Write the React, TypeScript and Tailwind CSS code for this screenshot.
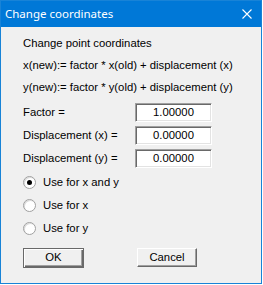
import { useState } from "react";

const rows = [
  { label: "Factor =", value: "1.00000" },
  { label: "Displacement (x) =", value: "0.00000" },
  { label: "Displacement (y) =", value: "0.00000" },
];

const options = ["Use for x and y", "Use for x", "Use for y"];

function Radio({ checked, label, onClick }: { checked: boolean; label: string; onClick: () => void }) {
  return (
    <button type="button" onClick={onClick} className="flex h-[23px] items-center gap-[7px] text-left">
      <span className="flex h-[13px] w-[13px] items-center justify-center rounded-full border border-[#a0a0a0] bg-white shadow-[inset_1px_1px_0_#dcdcdc]">
        {checked && <span className="h-[5px] w-[5px] rounded-full bg-black" />}
      </span>
      <span>{label}</span>
    </button>
  );
}

function WinButton({ children, isDefault }: { children: string; isDefault?: boolean }) {
  return (
    <button
      type="button"
      className={
        isDefault
          ? "h-[20px] w-[61px] border border-[#696969] bg-[#f0f0f0] shadow-[inset_1px_1px_0_#fff,inset_-1px_-1px_0_#696969,inset_-2px_-2px_0_#a0a0a0]"
          : "h-[19px] w-[60px] border-t border-l border-white border-b border-r border-b-[#696969] border-r-[#696969] bg-[#f0f0f0] shadow-[inset_-1px_-1px_0_#a0a0a0]"
      }
    >
      {children}
    </button>
  );
}

export default function App() {
  const [mode, setMode] = useState(0);

  return (
    <div className="h-[285px] w-[263px] bg-white">
      <div className="flex h-[284px] w-[262px] flex-col border border-[#1883d7] bg-[#f0f0f0]">
        <div className="flex h-[26px] shrink-0 items-center justify-between bg-[#0078d7] pl-[4px] pr-[9px] text-[11.5px] text-white [font-family:'Noto_Sans',sans-serif]">
          <span className="-mt-[1px]">Change coordinates</span>
          <svg width="10" height="10" viewBox="0 0 10 10" className="-mt-[1px]" aria-hidden>
            <path d="M0.5 0.5L9.5 9.5M9.5 0.5L0.5 9.5" stroke="white" strokeWidth="1.1" />
          </svg>
        </div>

        <div className="flex flex-col pl-[22px] pt-[6px] text-[11.3px] leading-none text-black [font-family:'Liberation_Sans',Arial,sans-serif]">
          <div className="flex h-[22px] items-center">Change point coordinates</div>
          <div className="flex h-[22px] items-center">x(new):= factor * x(old) + displacement (x)</div>
          <div className="flex h-[22px] items-center">y(new):= factor * y(old) + displacement (y)</div>

          <div className="mt-[2px] flex flex-col">
            {rows.map((r) => (
              <div key={r.label} className="flex h-[23px] items-center">
                <span className="w-[112px]">{r.label}</span>
                <div className="flex h-[19px] w-[77px] items-center justify-center border border-t-[#a0a0a0] border-l-[#a0a0a0] border-b-white border-r-white bg-white shadow-[inset_1px_1px_0_#696969,inset_-1px_-1px_0_#e3e3e3]">
                  {r.value}
                </div>
              </div>
            ))}
          </div>

          <div className="mt-[1px] flex flex-col items-start">
            {options.map((o, i) => (
              <Radio key={o} label={o} checked={mode === i} onClick={() => setMode(i)} />
            ))}
          </div>

          <div className="mt-[8px] flex gap-[53px]">
            <WinButton isDefault>OK</WinButton>
            <WinButton>Cancel</WinButton>
          </div>
        </div>
      </div>
    </div>
  );
}
